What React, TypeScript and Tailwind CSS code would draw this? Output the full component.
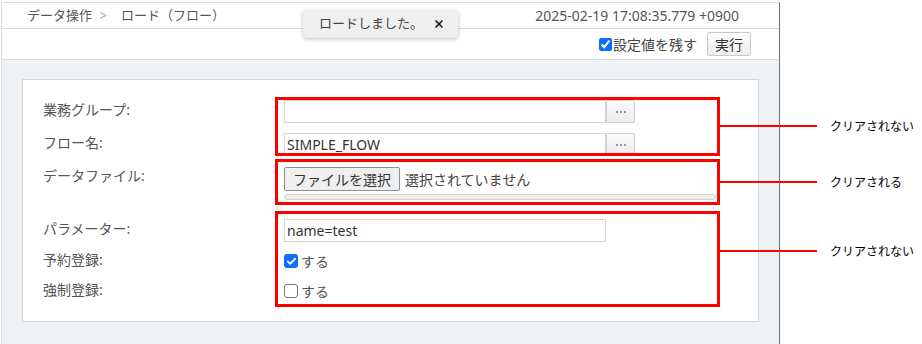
import { Check, X } from 'lucide-react'

const font = { fontFamily: '"Noto Sans", "Noto Sans CJK JP", sans-serif' }

function BoxCheck({ checked }: { checked: boolean }) {
  return checked ? (
    <span className="flex h-[14px] w-[14px] items-center justify-center rounded-[3px] bg-[#0d6efd]">
      <Check className="h-[11px] w-[11px] text-white" strokeWidth={4} />
    </span>
  ) : (
    <span className="h-[14px] w-[14px] rounded-[3px] border border-[#777] bg-white" />
  )
}

function Row({ label, className, children }: { label: string; className?: string; children: React.ReactNode }) {
  return (
    <div className={`flex ${className ?? ''}`}>
      <div className="flex h-[23px] w-[241px] shrink-0 items-center pb-[5px] text-[14px] text-[#555]">{label}</div>
      <div className="flex-1">{children}</div>
    </div>
  )
}

function PickerInput({ value }: { value: string }) {
  return (
    <div className="flex h-[23px] items-center">
      <div className="flex h-[23px] w-[322px] items-center border border-[#d4d4d4] bg-white px-[2px] text-[14px] text-[#333]">
        {value}
      </div>
      <div className="flex h-[23px] w-[29px] items-center justify-center gap-[2px] rounded-[2px] border border-[#cfcfcf] bg-gradient-to-b from-[#fafafa] to-[#ececec]">
        <span className="h-[2px] w-[2px] bg-[#7d9cc4]" />
        <span className="h-[2px] w-[2px] bg-[#7d9cc4]" />
        <span className="h-[2px] w-[2px] bg-[#7d9cc4]" />
      </div>
    </div>
  )
}

export default function App() {
  return (
    <div className="relative h-[344px] w-[922px] overflow-hidden bg-white" style={font}>
      {/* app panel */}
      <div className="ml-px mt-[2px] flex h-[342px] w-[779px] flex-col border-l border-t border-r border-l-[#dcdcdc] border-t-[#dcdcdc] border-r-[#6f6f6f]">
        <div className="flex h-[26px] shrink-0 items-center justify-between border-b border-[#dcdcdc] pl-[25px] pr-[40px] text-[#555]">
          <div className="flex items-center text-[13px]">
            <span>データ操作</span>
            <span className="ml-[8px] mr-[14px] text-[12px] text-[#999]">&gt;</span>
            <span>ロード（フロー）</span>
          </div>
          <span className="text-[14px] text-[#555]">2025-02-19 17:08:35.779 +0900</span>
        </div>
        <div className="flex h-[31px] shrink-0 items-center justify-end border-b border-[#dcdcdc] pr-[28px]">
          <label className="flex items-center text-[14px] text-[#444]">
            <input type="checkbox" defaultChecked className="m-0 mr-px h-[13px] w-[13px] accent-[#0b6dff]" />
            設定値を残す
          </label>
          <div className="ml-[10px] flex h-[24px] w-[44px] items-center justify-center rounded-[3px] border border-[#c8c8c8] bg-gradient-to-b from-[#fdfdfd] to-[#ededed] text-[14px] text-[#333]">
            実行
          </div>
        </div>
        <div className="flex-1 bg-[#eff2f5] px-[20px] pt-[19px]">
          <div className="h-[243px] border border-[#d6d6d6] bg-white pl-[20px] pt-[20px]">
            <Row label="業務グループ:">
              <PickerInput value="" />
            </Row>
            <Row label="フロー名:" className="mt-[10px]">
              <PickerInput value="SIMPLE_FLOW" />
            </Row>
            <div className="mt-[11px] flex">
              <div className="flex h-[24px] w-[241px] shrink-0 items-center pb-[7px] text-[14px] text-[#555]">データファイル:</div>
              <div className="flex-1 pr-[42px]">
                <div className="flex h-[24px] items-center text-[14px] text-[#444]">
                  <div className="flex h-[24px] items-center rounded-[2px] border border-[#8f8f8f] bg-[#efefef] px-[8px] text-[#333]">
                    ファイルを選択
                  </div>
                  <span className="ml-[5px]">選択されていません</span>
                </div>
                <div className="mt-[3px] h-[6px] rounded-full border border-[#cfcfcf] bg-[#eeeeee]" />
              </div>
            </div>
            <Row label="パラメーター:" className="mt-[19px]">
              <div className="flex h-[23px] w-[322px] items-center border border-[#d4d4d4] bg-white px-[2px] text-[14px] text-[#333]">
                name=test
              </div>
            </Row>
            <div className="mt-[9px] flex h-[20px] items-center">
              <div className="w-[241px] shrink-0 pb-[3px] text-[14px] text-[#555]">予約登録:</div>
              <BoxCheck checked />
              <span className="ml-[3px] text-[14px] text-[#555]">する</span>
            </div>
            <div className="mt-[10px] flex h-[20px] items-center">
              <div className="w-[241px] shrink-0 pb-[3px] text-[14px] text-[#555]">強制登録:</div>
              <BoxCheck checked={false} />
              <span className="ml-[3px] text-[14px] text-[#555]">する</span>
            </div>
          </div>
        </div>
      </div>

      {/* toast */}
      <div className="absolute left-[303px] top-[10px] flex h-[28px] w-[155px] items-center rounded-[4px] bg-[#efefef] pl-[16px] text-[13px] text-[#444] shadow-[0_1px_4px_rgba(0,0,0,0.25)]">
        ロードしました。
        <X className="ml-[10px] h-[12px] w-[12px] text-[#222]" strokeWidth={3.5} />
      </div>

      {/* annotations */}
      <div className="absolute left-[275px] top-[97px] h-[59px] w-[445px] border-[3px] border-[#ff0000]" />
      <div className="absolute left-[275px] top-[159px] h-[46px] w-[445px] border-[3px] border-[#ff0000]" />
      <div className="absolute left-[275px] top-[211px] h-[96px] w-[445px] border-[3px] border-[#ff0000]" />
      <div className="absolute left-[720px] top-[125px] h-[2px] w-[97px] bg-[#ff0000]" />
      <div className="absolute left-[720px] top-[181px] h-[2px] w-[97px] bg-[#ff0000]" />
      <div className="absolute left-[720px] top-[250px] h-[2px] w-[97px] bg-[#ff0000]" />
      <div className="absolute left-[830px] top-[117px] text-[12px] text-black" style={{ fontFamily: '"Noto Sans CJK JP", sans-serif' }}>クリアされない</div>
      <div className="absolute left-[830px] top-[173px] text-[12px] text-black" style={{ fontFamily: '"Noto Sans CJK JP", sans-serif' }}>クリアされる</div>
      <div className="absolute left-[830px] top-[242px] text-[12px] text-black" style={{ fontFamily: '"Noto Sans CJK JP", sans-serif' }}>クリアされない</div>
    </div>
  )
}
